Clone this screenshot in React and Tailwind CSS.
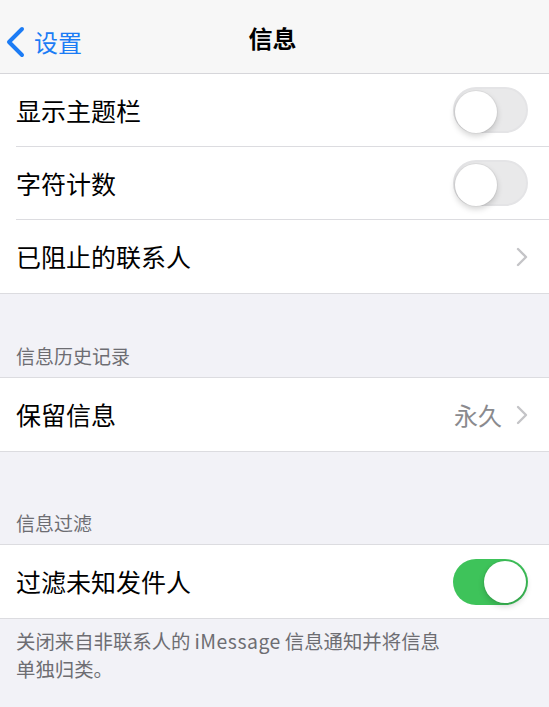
import React from "react";

const font = { fontFamily: '"Noto Sans CJK SC", "Noto Sans", sans-serif' };

function Toggle({ on }) {
  return (
    <div
      className={
        "relative w-[75px] h-[46px] rounded-full shrink-0 " +
        (on ? "bg-[#3ec35a]" : "bg-[#e9e9ea] border-[2px] border-[#e4e4e6]")
      }
    >
      <div
        className={
          "absolute top-[2px] w-[42px] h-[42px] rounded-full bg-white shadow-[0_3px_6px_rgba(0,0,0,0.18),0_0_0_1px_rgba(0,0,0,0.04)] " +
          (on ? "right-[2px]" : "left-0 top-0")
        }
      />
    </div>
  );
}

function Chevron() {
  return (
    <svg width="12" height="20" viewBox="0 0 12 20" className="shrink-0">
      <path d="M2 2 L10 10 L2 18" fill="none" stroke="#c4c4c7" strokeWidth="2.4" strokeLinecap="round" strokeLinejoin="round" />
    </svg>
  );
}

function Row({ label, right, last }) {
  return (
    <div className="flex items-stretch pl-4 bg-white">
      <div
        className={
          "flex flex-1 items-center justify-between h-[73px] pr-[21px] " +
          (last ? "" : "border-b border-[#dcdce0]")
        }
      >
        <span className="text-[25px] text-black leading-none">{label}</span>
        {right}
      </div>
    </div>
  );
}

function Header({ text, height }) {
  return (
    <div className={"flex items-end px-4 pb-[12px] " + height}>
      <span className="text-[19px] text-[#6d6d72] leading-none">{text}</span>
    </div>
  );
}

export default function App() {
  return (
    <div className="w-[549px] h-[707px] bg-[#f2f2f7] overflow-hidden" style={font}>
      {/* navigation bar */}
      <div className="relative h-[74px] bg-[#f7f7f7] border-b border-[#d6d6da] flex items-center justify-center">
        <div className="absolute left-[6px] top-[26px] flex items-center gap-[8px]">
          <svg width="20" height="32" viewBox="0 0 20 32">
            <path d="M16 3 L3 16 L16 29" fill="none" stroke="#1c7cf5" strokeWidth="4" strokeLinecap="round" strokeLinejoin="round" />
          </svg>
          <span className="text-[24px] text-[#1c7cf5] leading-none">设置</span>
        </div>
        <span className="text-[24px] font-bold text-black leading-none mt-[2px] ml-[-4px]">信息</span>
      </div>

      <div className="border-b border-[#dcdce0]">
        <Row label="显示主题栏" right={<Toggle on={false} />} />
        <Row label="字符计数" right={<Toggle on={false} />} />
        <Row label="已阻止的联系人" right={<Chevron />} last />
      </div>

      <Header text="信息历史记录" height="h-[83px]" />
      <div className="border-y border-[#dcdce0]">
        <Row
          label="保留信息"
          right={
            <div className="flex items-center gap-[14px]">
              <span className="text-[24px] text-[#8a8a8e] leading-none">永久</span>
              <Chevron />
            </div>
          }
          last
        />
      </div>

      <Header text="信息过滤" height="h-[92px]" />
      <div className="border-y border-[#dcdce0]">
        <Row label="过滤未知发件人" right={<Toggle on />} last />
      </div>

      <div className="flex flex-col px-4 pt-[8px] text-[19.4px] text-[#6d6d72]">
        <div className="h-[28px] leading-[28px] whitespace-nowrap">
          关闭来自非联系人的<span className="mx-[4px] tracking-[0.5px]">iMessage</span>信息通知并将信息
        </div>
        <div className="h-[28px] leading-[28px] whitespace-nowrap">单独归类。</div>
      </div>
    </div>
  );
}
